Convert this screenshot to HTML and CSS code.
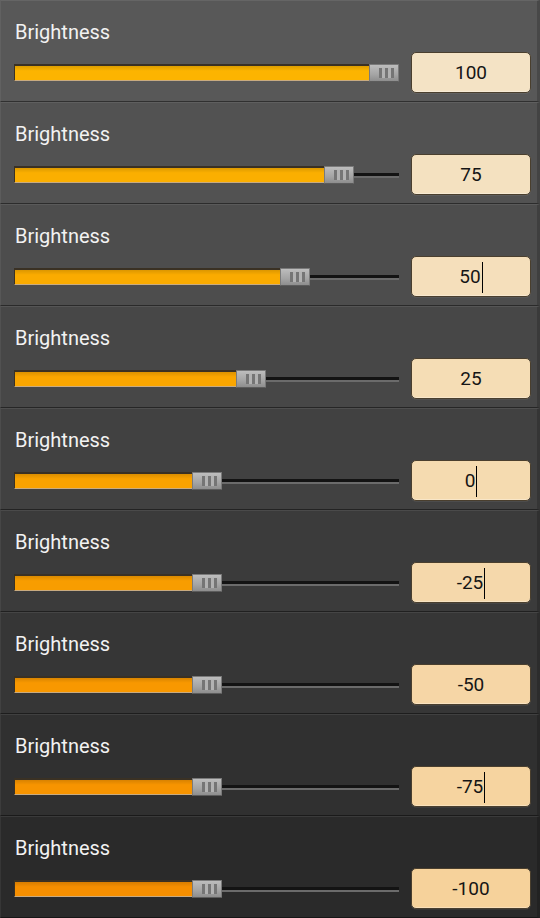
FILE: index.html
```html
<!DOCTYPE html>
<html lang="en">
<head>
  <meta charset="UTF-8" />
  <meta name="viewport" content="width=device-width, initial-scale=1.0"/>
  <title>Brightness sliders</title>
  <link rel="stylesheet" href="styles.css">
</head>
<body>

<div class="panel">
  <div class="row r0">
    <div class="label">Brightness</div>
    <div class="controls">
      <div class="slider"><div class="fill" style="width:355px"></div><div class="thumb"></div><div class="track"></div></div>
      <div class="value">100</div>
    </div>
  </div>

  <div class="row r1">
    <div class="label">Brightness</div>
    <div class="controls">
      <div class="slider"><div class="fill" style="width:310px"></div><div class="thumb"></div><div class="track"></div></div>
      <div class="value">75</div>
    </div>
  </div>

  <div class="row r2">
    <div class="label">Brightness</div>
    <div class="controls">
      <div class="slider"><div class="fill" style="width:266px"></div><div class="thumb"></div><div class="track"></div></div>
      <div class="value">50<span class="caret"></span></div>
    </div>
  </div>

  <div class="row r3">
    <div class="label">Brightness</div>
    <div class="controls">
      <div class="slider"><div class="fill" style="width:222px"></div><div class="thumb"></div><div class="track"></div></div>
      <div class="value">25</div>
    </div>
  </div>

  <div class="row r4">
    <div class="label">Brightness</div>
    <div class="controls">
      <div class="slider"><div class="fill" style="width:178px"></div><div class="thumb"></div><div class="track"></div></div>
      <div class="value">0<span class="caret"></span></div>
    </div>
  </div>

  <div class="row r5">
    <div class="label">Brightness</div>
    <div class="controls">
      <div class="slider"><div class="fill" style="width:178px"></div><div class="thumb"></div><div class="track"></div></div>
      <div class="value">-25<span class="caret"></span></div>
    </div>
  </div>

  <div class="row r6">
    <div class="label">Brightness</div>
    <div class="controls">
      <div class="slider"><div class="fill" style="width:178px"></div><div class="thumb"></div><div class="track"></div></div>
      <div class="value">-50</div>
    </div>
  </div>

  <div class="row r7">
    <div class="label">Brightness</div>
    <div class="controls">
      <div class="slider"><div class="fill" style="width:178px"></div><div class="thumb"></div><div class="track"></div></div>
      <div class="value">-75<span class="caret"></span></div>
    </div>
  </div>

  <div class="row r8">
    <div class="label">Brightness</div>
    <div class="controls">
      <div class="slider"><div class="fill" style="width:178px"></div><div class="thumb"></div><div class="track"></div></div>
      <div class="value">-100</div>
    </div>
  </div>
</div>

</body>
</html>
```

FILE: styles.css
```css
body {
  margin: 0;
  background-color: #222;
  font-family: Roboto, "Open Sans", sans-serif;
}
.panel {
  width: 540px;
}
.row {
  box-sizing: border-box;
  height: 102px;
  padding: 18px 0 0 13px;
  background: var(--bg);
  border-top: 1px solid rgba(255,255,255,0.08);
  border-left: 1px solid rgba(255,255,255,0.06);
  border-right: 3px solid rgba(0,0,0,0.18);
  border-bottom: 1px solid rgba(0,0,0,0.45);
}
.r0 { --bg: #585858; --fill: #fcb400; --box: #f4e3c5; }
.r1 { --bg: #525252; --fill: #fbaf00; --box: #f4e1c0; }
.r2 { --bg: #4d4d4d; --fill: #faab00; --box: #f5dfbb; }
.r3 { --bg: #474747; --fill: #faa600; --box: #f5ddb5; }
.r4 { --bg: #414141; --fill: #f9a200; --box: #f5dbb0; }
.r5 { --bg: #3b3b3b; --fill: #f89d00; --box: #f5d8ab; }
.r6 { --bg: #363636; --fill: #f89800; --box: #f6d6a6; }
.r7 { --bg: #303030; --fill: #f79400; --box: #f6d4a0; }
.r8 { --bg: #2a2a2a; --fill: #f68f00; --box: #f6d29b; }

.label {
  color: #f2f2f2;
  font-size: 20px;
  line-height: 26px;
  margin-left: 1px;
}
.controls {
  display: flex;
  align-items: center;
  margin-top: 7px;
}
.slider {
  display: flex;
  align-items: center;
  width: 385px;
  height: 41px;
}
.fill {
  box-sizing: border-box;
  height: 17px;
  background: linear-gradient(rgba(0,0,0,0.12), rgba(0,0,0,0) 35%), var(--fill);
  border-top: 2px solid #3a3124;
  border-left: 1px solid #3a3124;
  border-bottom: 1px solid #c9ab80;
}
.thumb {
  position: relative;
  box-sizing: border-box;
  width: 30px;
  height: 18px;
  background: linear-gradient(#bdbdbd, #a4a4a4 60%, #8e8e8e);
  border: 1px solid #7a7a7a;
  border-bottom-color: #5c5c5c;
  border-radius: 1px;
}
.thumb::before {
  content: "";
  position: absolute;
  left: 9px;
  top: 3px;
  width: 15px;
  height: 10px;
  background: repeating-linear-gradient(90deg, #757575 0 3px, #b2b2b2 3px 6px);
}
.track {
  flex: 1;
  height: 3px;
  background: #131313;
  border-bottom: 2px solid #6b6b6b;
  margin-top: 1px;
}
.value {
  box-sizing: border-box;
  width: 120px;
  height: 41px;
  margin-left: 12px;
  background: var(--box);
  border: 1px solid #4a3f2e;
  border-radius: 5px;
  box-shadow: inset 0 -1px 0 rgba(255,255,255,0.3), 0 1px 0 rgba(255,255,255,0.06);
  color: #151515;
  font-size: 19px;
  line-height: 39px;
  text-align: center;
}
.caret {
  display: inline-block;
  width: 1px;
  height: 31px;
  margin-left: 1px;
  background: #000;
  vertical-align: middle;
}
```
